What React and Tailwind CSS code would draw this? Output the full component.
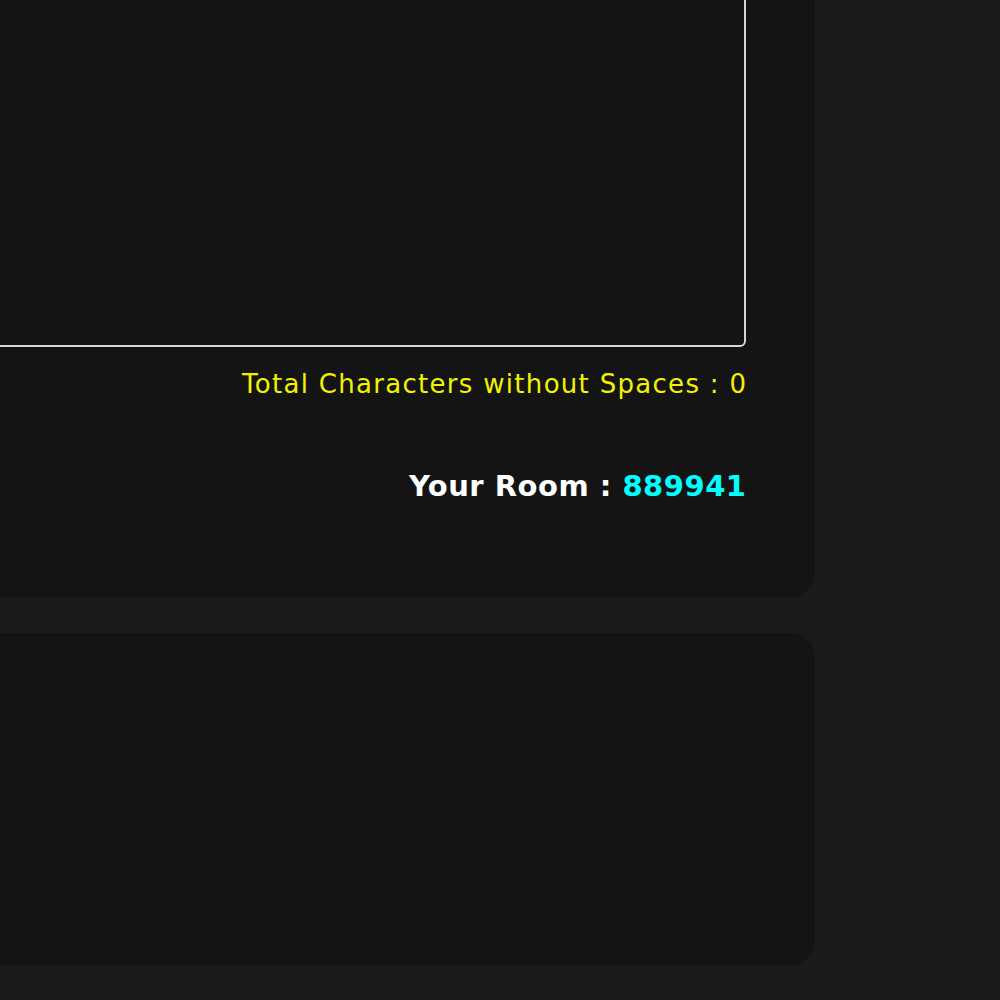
export default function App() {
  return (
    <div className="min-h-screen bg-[#1b1b1b] overflow-hidden" style={{ fontFamily: "'DejaVu Sans', sans-serif" }}>
      <div className="-mt-[300px] -ml-[185px] w-[1000px] flex flex-col gap-[35px]">
        {/* editor panel */}
        <div className="bg-[#141414] rounded-[25px] pl-[69px] pr-[69px] pt-[30px] pb-[91px]">
          <textarea
            className="block w-full h-[617px] bg-[#141414] border-2 border-[#d6d6d6] rounded-[6px] resize-none outline-none"
            readOnly
          />
          <p className="mt-[20px] text-right text-[26px] leading-[34px] tracking-[1.3px] -mr-[1.3px] text-[#f2f200]">
            Total Characters without Spaces : 0
          </p>
          <p className="mt-[64px] text-right text-[29px] leading-[42px] tracking-[0.5px] -mr-[0.5px] font-bold text-white">
            Your Room : <span className="text-[#00ffff]">889941</span>
          </p>
        </div>

        {/* lower panel */}
        <div className="bg-[#141414] rounded-[25px] h-[333px]" />
      </div>
    </div>
  );
}
